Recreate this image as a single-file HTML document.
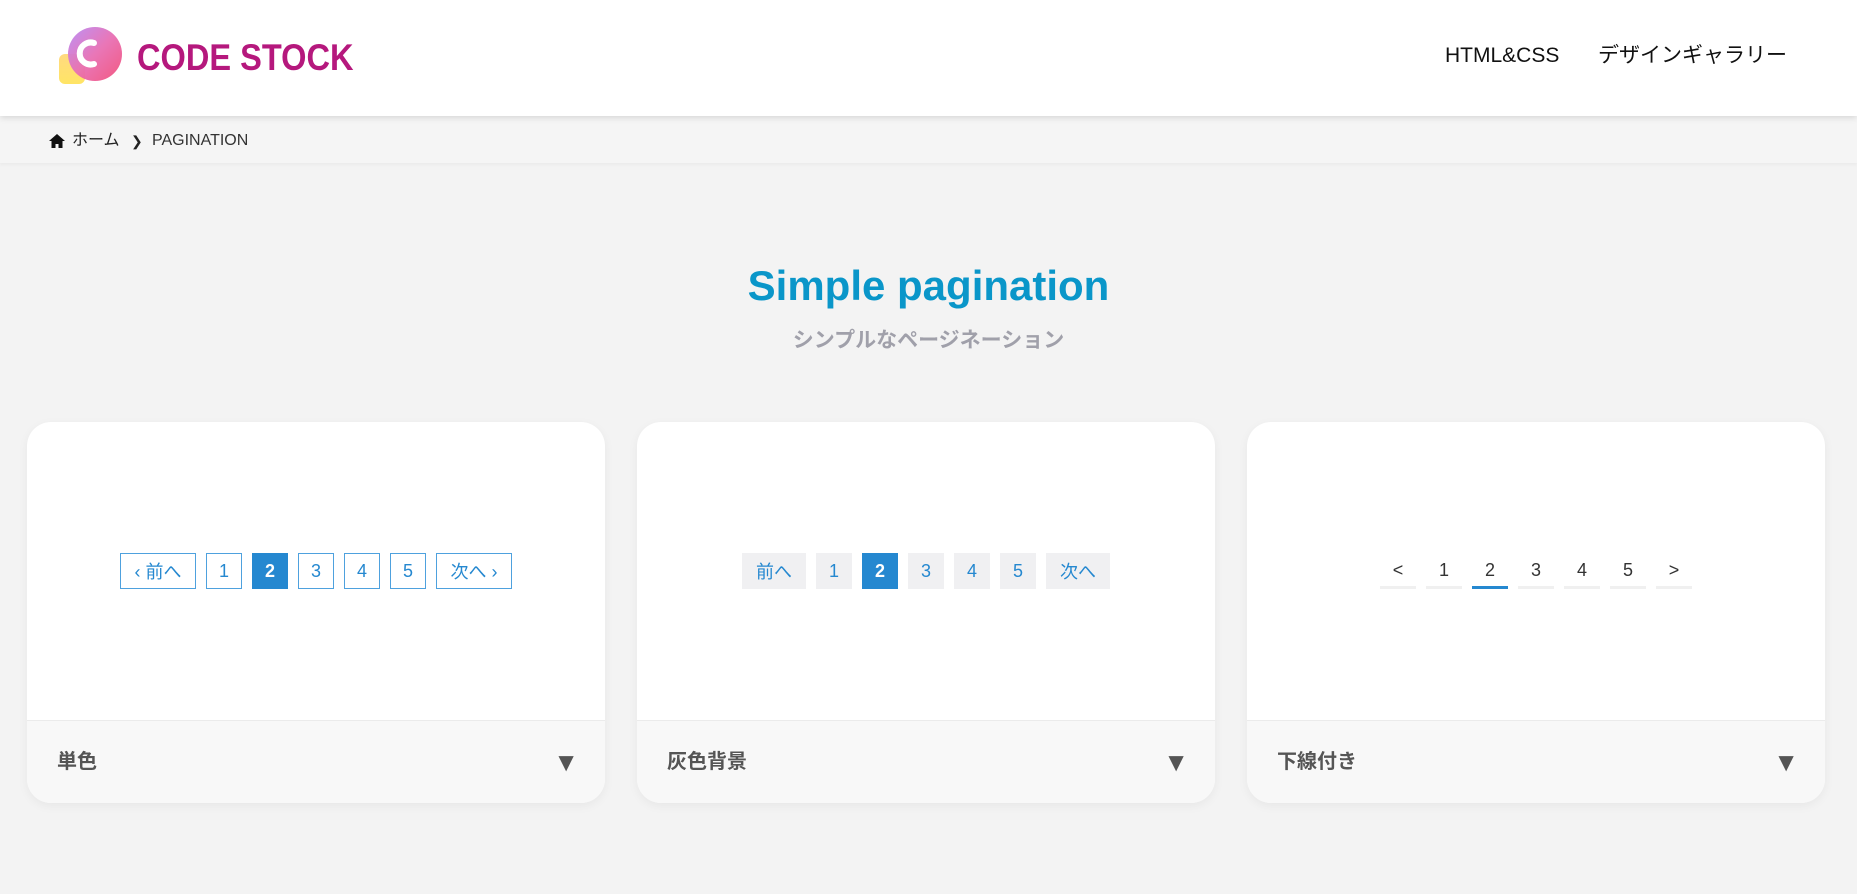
<!DOCTYPE html>
<html><head><meta charset="utf-8"><style>
*{box-sizing:border-box;margin:0;padding:0}
body{width:1857px;height:894px;background:#f3f3f3;font-family:"Liberation Sans","Noto Sans CJK JP",sans-serif;overflow:hidden;position:relative}
.hdr{position:absolute;left:0;top:0;width:1857px;height:116px;background:#fff;box-shadow:0 2px 6px rgba(0,0,0,.12);z-index:2}
.logo{position:absolute;left:57px;top:24px;width:72px;height:64px}
.brand{position:absolute;left:137px;top:38px;font-size:37px;font-weight:bold;color:#b5187d;line-height:40px;transform:scaleX(0.88);transform-origin:left center}
.nav{position:absolute;top:43px;font-size:21px;color:#111;line-height:26px}
.bc{position:absolute;left:0;top:116px;width:1857px;height:47px;background:#f5f5f5;font-size:16px;color:#222;box-shadow:0 2px 3px rgba(0,0,0,.04)}
.bc span{position:absolute;top:16px;line-height:18px}
h1{position:absolute;left:0;width:1857px;top:260px;text-align:center;font-size:42px;color:#0a96c9;font-weight:bold;line-height:52px}
.sub{position:absolute;left:0;width:1857px;top:328px;text-align:center;font-size:21px;color:#a0a0aa;font-weight:bold;line-height:26px}
.card{position:absolute;top:422px;width:578px;height:381px;background:#fff;border-radius:24px;overflow:hidden;box-shadow:0 3px 10px rgba(0,0,0,.05)}
.ft{position:absolute;left:0;top:298px;width:100%;height:83px;background:#f8f8f8;border-top:1px solid #ebebeb}
.ft .l{position:absolute;left:30px;top:29px;font-size:20px;color:#555;font-weight:bold;line-height:24px}
.ft .a{position:absolute;right:26px;top:27px;font-size:26px;color:#555;line-height:28px}
.pg{position:absolute;top:131px;left:0;width:100%;display:flex;justify-content:center;gap:10px}
.pg div{width:36px;height:36px;display:flex;align-items:center;justify-content:center;font-size:18px;color:#2588d0}
.p1 div{border:1px solid #4ea1de}
.p1 .act{background:#2588d0;color:#fff;font-weight:bold;border-color:#2588d0}
.p1 .w{width:76px}
.p2 div{background:#f0f0f2}
.p2 .act{background:#2588d0;color:#fff;font-weight:bold}
.p2 .w{width:64px}
.p3 div{color:#333;border-bottom:3px solid #f0f0f0;padding-top:2px}
.p3 .act{border-bottom-color:#2588d0}
</style></head><body>
<div class="hdr">
<svg class="logo" viewBox="0 0 72 64">
<defs><linearGradient id="g" x1="0" y1="0" x2="1" y2="1"><stop offset="0" stop-color="#b98cf5"/><stop offset=".5" stop-color="#e86fb3"/><stop offset="1" stop-color="#f2507a"/></linearGradient>
<linearGradient id="y" x1="0" y1="0" x2="0" y2="1"><stop offset="0" stop-color="#ffd36a"/><stop offset="1" stop-color="#ffe04a"/></linearGradient></defs>
<rect x="2" y="30" width="26" height="30" rx="6" fill="url(#y)" opacity=".85"/>
<circle cx="38" cy="30" r="27" fill="url(#g)" opacity=".95"/>
<path d="M43 19 A11 11 0 1 0 43 40" fill="none" stroke="#fff" stroke-width="6" stroke-linecap="round" transform="translate(-6,0)"/>
</svg>
<div class="brand">CODE STOCK</div>
<div class="nav" style="left:1445px">HTML&amp;CSS</div>
<div class="nav" style="left:1598px">デザインギャラリー</div>
</div>
<div class="bc">
<svg style="position:absolute;left:49px;top:18px" width="16" height="14" viewBox="0 0 16 14"><path d="M8 0 L16 7 H13.5 V14 H9.5 V10 H6.5 V14 H2.5 V7 H0 Z" fill="#111"/></svg>
<span style="left:72px">ホーム</span>
<span style="left:131px;font-size:14px">❯</span>
<span style="left:152px;color:#333">PAGINATION</span>
</div>
<h1>Simple pagination</h1>
<div class="sub">シンプルなページネーション</div>

<div class="card" style="left:27px">
<div class="pg p1"><div class="w">‹&nbsp;前へ</div><div>1</div><div class="act">2</div><div>3</div><div>4</div><div>5</div><div class="w">次へ&nbsp;›</div></div>
<div class="ft"><div class="l">単色</div><div class="a">▼</div></div>
</div>
<div class="card" style="left:637px">
<div class="pg p2"><div class="w">前へ</div><div>1</div><div class="act">2</div><div>3</div><div>4</div><div>5</div><div class="w">次へ</div></div>
<div class="ft"><div class="l">灰色背景</div><div class="a">▼</div></div>
</div>
<div class="card" style="left:1247px">
<div class="pg p3"><div>&lt;</div><div>1</div><div class="act">2</div><div>3</div><div>4</div><div>5</div><div>&gt;</div></div>
<div class="ft"><div class="l">下線付き</div><div class="a">▼</div></div>
</div>
</body></html>
